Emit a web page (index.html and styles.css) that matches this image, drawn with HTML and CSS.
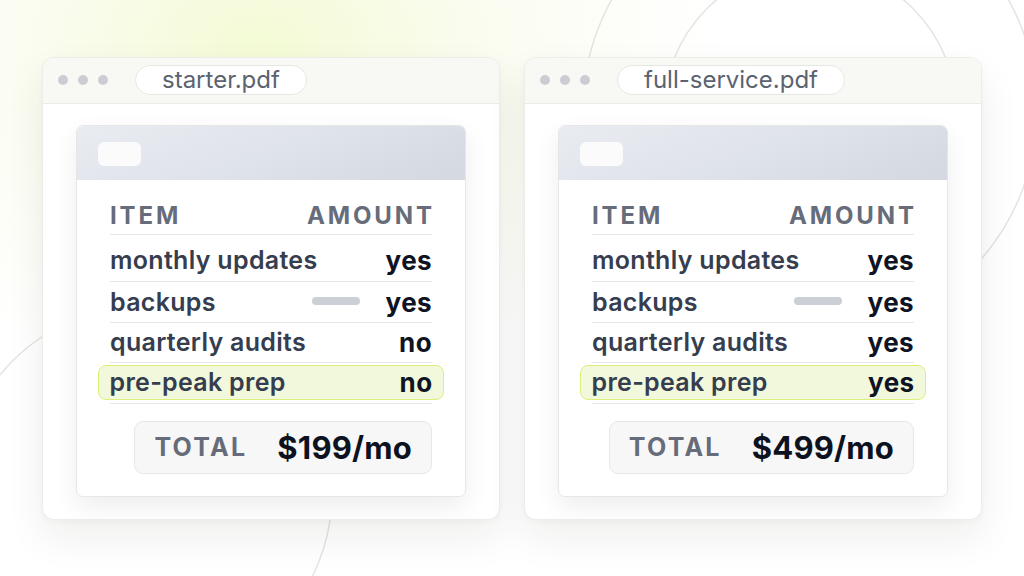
FILE: index.html
```html
<!DOCTYPE html>
<html lang="en">
<head>
<meta charset="utf-8">
<title>Plans</title>
<link rel="stylesheet" href="styles.css">
</head>
<body>
<div class="scene">
  <svg class="arcs" width="1024" height="576" viewBox="0 0 1024 576" aria-hidden="true">
    <circle cx="810" cy="110" r="227" />
    <circle cx="810" cy="112" r="146" />
    <circle cx="145" cy="493" r="187" />
  </svg>
  <div class="windows">
    <div class="window">
      <div class="titlebar">
        <div class="dots"><span></span><span></span><span></span></div>
        <div class="tab">starter.pdf</div>
      </div>
      <div class="win-body">
        <div class="card">
          <div class="card-head"><div class="chip"></div></div>
          <div class="table">
            <div class="thead"><span>ITEM</span><span>AMOUNT</span></div>
            <div class="row r1"><span class="label">monthly updates</span><span class="val">yes</span></div>
            <div class="row r2"><span class="label">backups</span><span class="bar"></span><span class="val">yes</span></div>
            <div class="row r3"><span class="label">quarterly audits</span><span class="val">no</span></div>
            <div class="row r4"><div class="hl"><span class="label">pre-peak prep</span><span class="val">no</span></div></div>
          </div>
          <div class="total-wrap">
            <div class="total"><span class="total-label">TOTAL</span><span class="total-val">$199/mo</span></div>
          </div>
        </div>
      </div>
    </div>
    <div class="window">
      <div class="titlebar">
        <div class="dots"><span></span><span></span><span></span></div>
        <div class="tab">full-service.pdf</div>
      </div>
      <div class="win-body">
        <div class="card">
          <div class="card-head"><div class="chip"></div></div>
          <div class="table">
            <div class="thead"><span>ITEM</span><span>AMOUNT</span></div>
            <div class="row r1"><span class="label">monthly updates</span><span class="val">yes</span></div>
            <div class="row r2"><span class="label">backups</span><span class="bar"></span><span class="val">yes</span></div>
            <div class="row r3"><span class="label">quarterly audits</span><span class="val">yes</span></div>
            <div class="row r4"><div class="hl"><span class="label">pre-peak prep</span><span class="val">yes</span></div></div>
          </div>
          <div class="total-wrap">
            <div class="total"><span class="total-label">TOTAL</span><span class="total-val">$499/mo</span></div>
          </div>
        </div>
      </div>
    </div>
  </div>
</div>
</body>
</html>
```
FILE: styles.css
```css
* { box-sizing: border-box; }
html, body { margin: 0; padding: 0; }
body {
  width: 1024px;
  height: 576px;
  overflow: hidden;
  font-family: "Inter", "Liberation Sans", sans-serif;
  background: #ffffff;
}
.scene {
  position: relative;
  width: 1024px;
  height: 576px;
  background:
    radial-gradient(ellipse 460px 340px at 260px 50px, rgba(242, 250, 208, 0.9) 0%, rgba(246, 250, 226, 0.5) 50%, rgba(255, 255, 255, 0) 100%),
    #ffffff;
  display: flex;
  align-items: center;
  justify-content: center;
}
.arcs {
  position: absolute;
  left: 0;
  top: 0;
  fill: none;
  stroke: #e4e4e0;
  stroke-width: 1.5;
}
.windows {
  position: relative;
  display: flex;
  gap: 24px;
}
.window {
  width: 458px;
  height: 463px;
  background: #ffffff;
  border: 1px solid #ecece8;
  border-radius: 12px;
  box-shadow: 0 18px 40px rgba(30, 30, 20, 0.07), 0 2px 6px rgba(30, 30, 20, 0.03);
  overflow: hidden;
  display: flex;
  flex-direction: column;
}
.titlebar {
  height: 46px;
  flex: none;
  background: #f8f8f5;
  border-bottom: 1px solid #ebebe7;
  display: flex;
  align-items: center;
  padding-left: 15px;
}
.dots { display: flex; gap: 10px; }
.dots span {
  width: 10px;
  height: 10px;
  border-radius: 50%;
  background: #cbcdd3;
}
.tab {
  margin-left: 27px;
  height: 30px;
  padding: 0 26px;
  border: 1px solid #e6e6e2;
  border-radius: 15px;
  background: #ffffff;
  color: #5b6270;
  font-size: 24px;
  font-weight: 400;
  line-height: 27px;
}
.win-body {
  padding: 21px 33px 22px;
  flex: 1;
}
.card {
  height: 372px;
  border: 1px solid #e6e6e6;
  border-radius: 7px;
  background: #ffffff;
  box-shadow: 0 10px 26px rgba(20, 20, 30, 0.07);
  overflow: hidden;
}
.card-head {
  height: 54px;
  background: linear-gradient(160deg, #e9ecf1 0%, #dfe3ea 50%, #d3d8e1 100%);
  padding: 16px 0 0 21px;
}
.chip {
  width: 43px;
  height: 24px;
  border-radius: 6px;
  background: #fbfbfc;
}
.table {
  padding: 0 33px;
}
.thead {
  display: flex;
  justify-content: space-between;
  padding-top: 21.5px;
  padding-bottom: 3.5px;
  border-bottom: 1px solid #e6e7ea;
  font-size: 24px;
  line-height: 29px;
  font-weight: 700;
  letter-spacing: 0.12em;
  color: #666c79;
}
.thead span:last-child { margin-right: -0.12em; }
.row {
  display: flex;
  align-items: center;
  border-bottom: 1px solid #e6e7ea;
  line-height: 29px;
}
.r1 { padding: 11px 0 6px; }
.r2 { padding: 6px 0 5px; }
.r3 { padding: 5px 0 5px; }
.r4 { padding: 2.5px 0; }
.label {
  flex: 1;
  font-size: 25px;
  font-weight: 600;
  color: #353d4e;
  letter-spacing: 0.3px;
}
.val {
  font-size: 26px;
  font-weight: 700;
  color: #0f1423;
  letter-spacing: 0.4px;
}
.bar {
  width: 48px;
  height: 8px;
  border-radius: 4px;
  background: #cbcfd6;
  margin-right: 26px;
  margin-top: -2px;
}
.hl {
  flex: 1;
  display: flex;
  align-items: center;
  height: 35px;
  margin: 0 -12px;
  padding: 0 10.5px;
  border: 1.5px solid #dcef7a;
  border-radius: 8px;
  background: #f2f8dc;
}
.total-wrap {
  display: flex;
  justify-content: flex-end;
  padding: 17px 33px 0;
}
.total {
  display: flex;
  align-items: center;
  gap: 30px;
  height: 53px;
  padding: 0 19px;
  border: 1px solid #e7e7e7;
  border-radius: 9px;
  background: #f7f7f7;
}
.total-label {
  font-size: 25px;
  font-weight: 700;
  letter-spacing: 0.09em;
  color: #666c79;
}
.total-val {
  font-size: 31px;
  font-weight: 700;
  color: #0d1220;
  letter-spacing: 0.2px;
}
```
